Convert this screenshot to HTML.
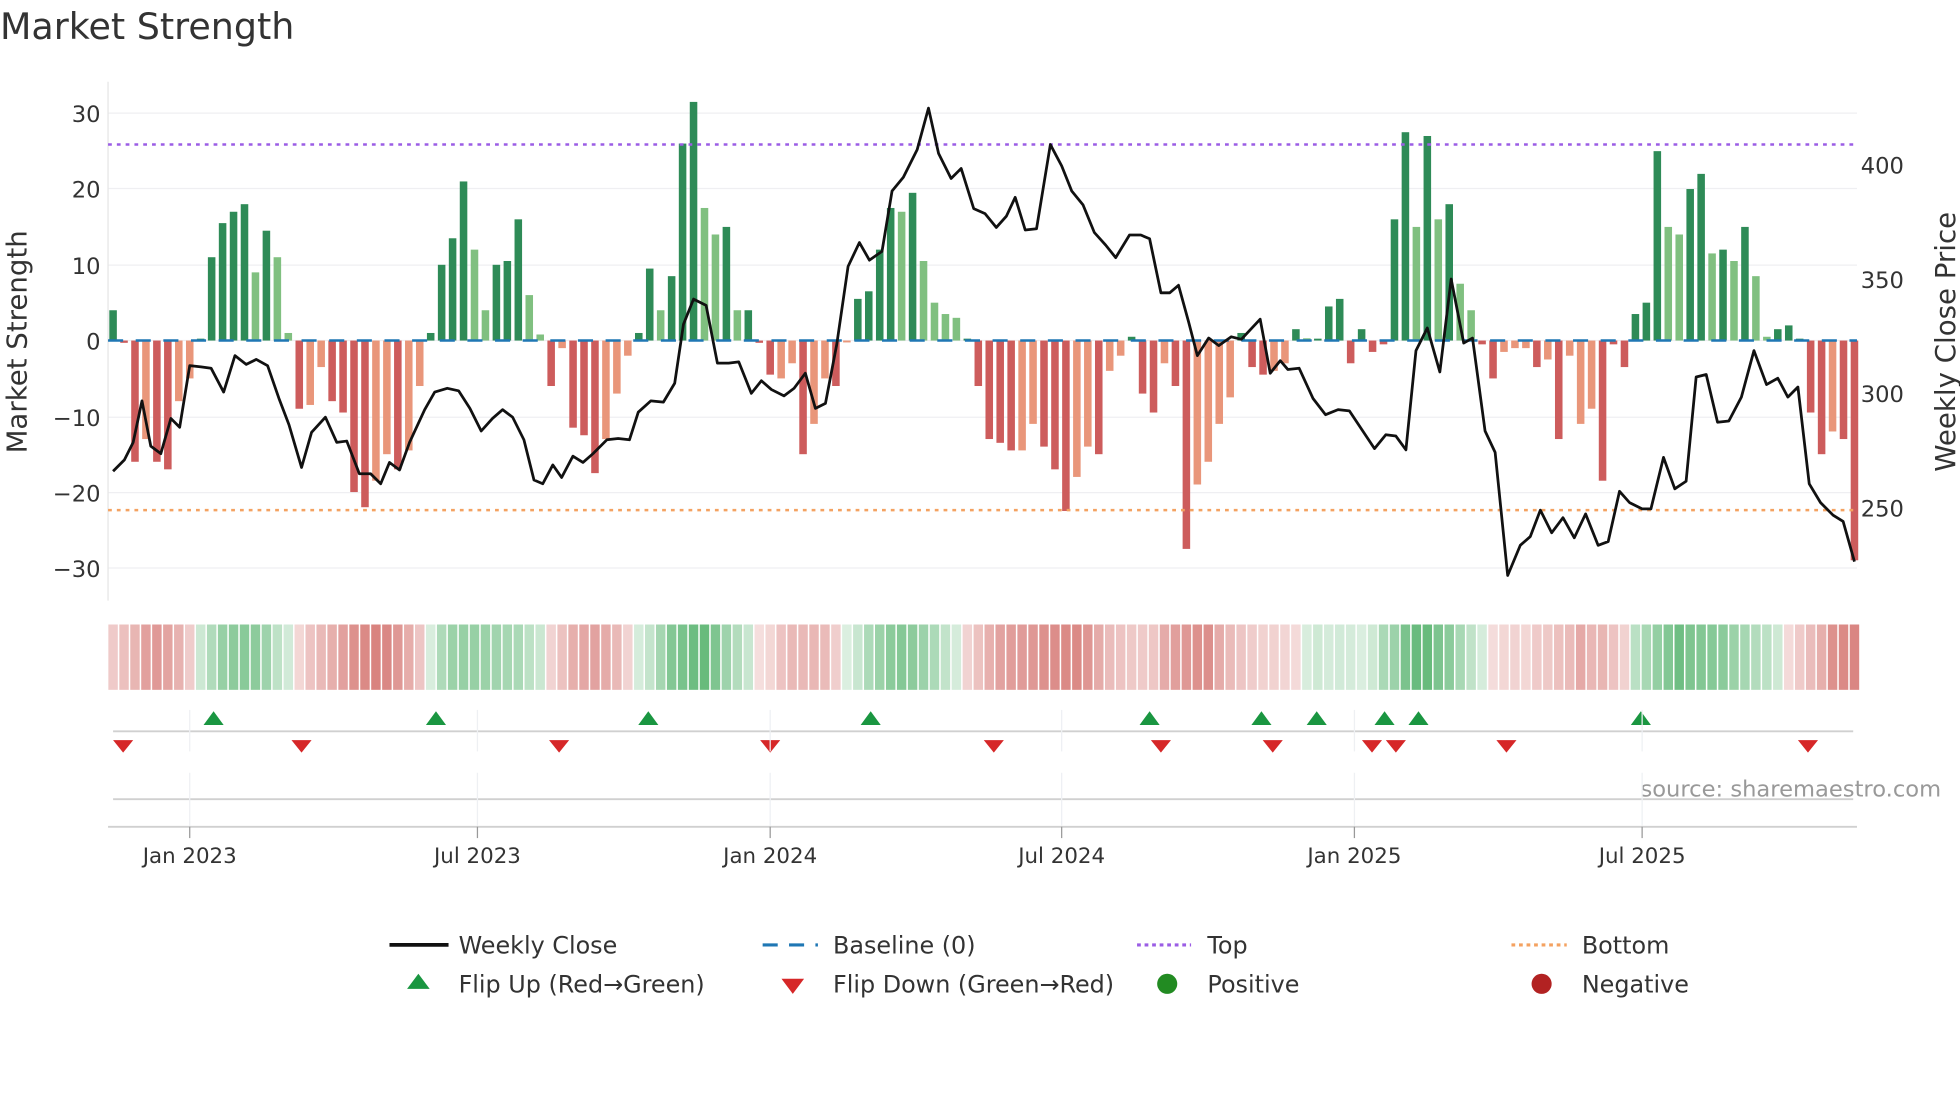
<!DOCTYPE html>
<html><head><meta charset="utf-8"><style>
html,body{margin:0;padding:0;background:#fff;}
svg{display:block;}
text{font-family:"DejaVu Sans","Liberation Sans",sans-serif;}
</style></head><body>
<svg id="s" width="1960" height="1102" viewBox="0 0 1560 877" xmlns="http://www.w3.org/2000/svg">
<rect width="1560" height="877" fill="#fff"/>
<text x="0" y="31" font-size="29" fill="#333">Market Strength</text>
<g id="grid"></g>
<line x1="86" y1="65" x2="86" y2="478" stroke="#e6e6e6" stroke-width="1"/>
<g id="bars"></g>
<line x1="86" y1="115" x2="1478" y2="115" stroke="#9b5de5" stroke-width="2" stroke-dasharray="3,4"/>
<line x1="86" y1="406" x2="1478" y2="406" stroke="#f4a261" stroke-width="2" stroke-dasharray="3,4"/>
<line x1="86" y1="271" x2="1478" y2="271" stroke="#1f77b4" stroke-width="2" stroke-dasharray="12,10"/>
<polyline id="price" fill="none" stroke="#111" stroke-width="2.2" stroke-linejoin="round"/>
<g id="strip"></g>
<g id="markers"></g>
<line x1="90" y1="582" x2="1475" y2="582" stroke="#d0d0d0" stroke-width="1.5"/>
<line x1="90" y1="636" x2="1475" y2="636" stroke="#d0d0d0" stroke-width="1.5"/>
<line x1="86" y1="658" x2="1478" y2="658" stroke="#d0d0d0" stroke-width="1.5"/>
<text x="1545" y="634" font-size="18" fill="#999" text-anchor="end">source: sharemaestro.com</text>
<g id="xt"></g>
<g font-size="18" fill="#333" text-anchor="end">
<text x="80" y="97">30</text><text x="80" y="157">20</text><text x="80" y="218">10</text><text x="80" y="278">0</text>
<text x="80" y="339">−10</text><text x="80" y="399">−20</text><text x="80" y="459">−30</text>
</g>
<g font-size="18" fill="#333">
<text x="1481" y="138">400</text><text x="1481" y="229">350</text><text x="1481" y="320">300</text><text x="1481" y="411">250</text>
</g>
<text transform="translate(21,272) rotate(-90)" font-size="22" fill="#333" text-anchor="middle">Market Strength</text>
<text transform="translate(1556,272) rotate(-90)" font-size="22" fill="#333" text-anchor="middle">Weekly Close Price</text>
<g font-size="19" fill="#333">
<line x1="310" y1="752" x2="357" y2="752" stroke="#111" stroke-width="3"/>
<text x="365" y="759">Weekly Close</text>
<line x1="607" y1="752" x2="651" y2="752" stroke="#1f77b4" stroke-width="2.5" stroke-dasharray="12,9"/>
<text x="663" y="759">Baseline (0)</text>
<line x1="905" y1="752" x2="948" y2="752" stroke="#9b5de5" stroke-width="2.5" stroke-dasharray="3,3"/>
<text x="961" y="759">Top</text>
<line x1="1203" y1="752" x2="1247" y2="752" stroke="#f4a261" stroke-width="2.5" stroke-dasharray="3,3"/>
<text x="1259" y="759">Bottom</text>
<polygon points="333,775 342,787 324,787" fill="#1a9641"/>
<text x="365" y="790">Flip Up (Red→Green)</text>
<polygon points="622,779 640,779 631,791" fill="#d62728"/>
<text x="663" y="790">Flip Down (Green→Red)</text>
<circle cx="929" cy="783" r="8" fill="#228b22"/>
<text x="961" y="790">Positive</text>
<circle cx="1227" cy="783" r="8" fill="#b22222"/>
<text x="1259" y="790">Negative</text>
</g>
</svg>
<script>
var NS="http://www.w3.org/2000/svg";
function el(p,t,a){var e=document.createElementNS(NS,t);for(var k in a)e.setAttribute(k,a[k]);document.getElementById(p).appendChild(e);return e;}
[90,150,211,271,332,392,452].forEach(function(y){el("grid","line",{x1:86,y1:y,x2:1478,y2:y,stroke:"#efeff2","stroke-width":1});});
var B=[[4,1],[-0.3,1],[-16,1],[-13,0],[-16,1],[-17,1],[-8,0],[-5,0],[0,1],[11,1],[15.5,1],[17,1],[18,1],[9,0],[14.5,1],[11,0],[1,0],[-9,1],[-8.5,0],[-3.5,0],[-8,1],[-9.5,1],[-20,1],[-22,1],[-18.5,0],[-15,0],[-17,1],[-14.5,0],[-6,0],[1,1],[10,1],[13.5,1],[21,1],[12,0],[4,0],[10,1],[10.5,1],[16,1],[6,0],[0.8,0],[-6,1],[-1,0],[-11.5,1],[-12.5,1],[-17.5,1],[-13,0],[-7,0],[-2,0],[1,1],[9.5,1],[4,0],[8.5,1],[26,1],[31.5,1],[17.5,0],[14,0],[15,1],[4,0],[4,1],[-0.3,1],[-4.5,1],[-5,0],[-3,0],[-15,1],[-11,0],[-5,0],[-6,1],[-0.2,0],[5.5,1],[6.5,1],[12,1],[17.5,1],[17,0],[19.5,1],[10.5,0],[5,0],[3.5,0],[3,0],[0,1],[-6,1],[-13,1],[-13.5,1],[-14.5,1],[-14.5,0],[-11,0],[-14,1],[-17,1],[-22.5,1],[-18,0],[-14,0],[-15,1],[-4,0],[-2,0],[0.5,1],[-7,1],[-9.5,1],[-3,0],[-6,1],[-27.5,1],[-19,0],[-16,0],[-11,0],[-7.5,0],[1,1],[-3.5,1],[-4.5,1],[-4,0],[-3,0],[1.5,1],[0.3,0],[0,1],[4.5,1],[5.5,1],[-3,1],[1.5,1],[-1.5,1],[-0.5,1],[16,1],[27.5,1],[15,0],[27,1],[16,0],[18,1],[7.5,0],[4,0],[-0.5,1],[-5,1],[-1.5,0],[-1,0],[-1,0],[-3.5,1],[-2.5,0],[-13,1],[-2,0],[-11,0],[-9,0],[-18.5,1],[-0.5,1],[-3.5,1],[3.5,1],[5,1],[25,1],[15,0],[14,0],[20,1],[22,1],[11.5,0],[12,1],[10.5,0],[15,1],[8.5,0],[0.5,0],[1.5,1],[2,1],[0,1],[-9.5,1],[-15,1],[-12,0],[-13,1],[-29,1]];
var n=B.length,x0=90,x1=1476,st=(x1-x0)/(n-1);
B.forEach(function(b,i){var v=b[0],x=x0+i*st,y=271-v*6.03,c;
 if(v>=0)c=b[1]?"#2e8b57":"#80c080";else c=b[1]?"#cd5c5c":"#e9967a";
 var h=Math.max(Math.abs(v*6.03),1.5);
 el("bars","rect",{x:x-3,y:v>=0?271-h:271,width:6,height:h,fill:c});
 var s=0,c2=0;for(var j=Math.max(0,i-2);j<=Math.min(n-1,i+2);j++){s+=B[j][0];c2++;}s/=c2;
 var a=Math.min(0.18+Math.abs(s)/35,0.8);
 el("strip","rect",{x:x-st/2+0.6,y:497,width:st-1.2,height:52,fill:s>=0?"#3aa655":"#c9504b","fill-opacity":a.toFixed(2)});
});
var P=[[90,375],[99,366],[106,352],[113,319],[120,355],[128,361],[136,333],[143,340],[151,291],[160,292],[168,293],[178,312],[187,283],[196,290],[204,286],[213,291],[222,317],[230,338],[240,372],[248,344],[259,332],[268,352],[276,351],[286,377],[295,377],[303,385],[310,368],[318,374],[326,352],[338,326],[346,312],[356,309],[365,311],[374,325],[383,343],[392,333],[400,326],[408,332],[417,350],[425,382],[432,385],[440,370],[447,380],[456,363],[464,368],[472,361],[483,350],[492,349],[501,350],[508,328],[518,319],[528,320],[537,305],[544,258],[552,238],[562,243],[571,289],[580,289],[588,288],[598,313],[606,303],[614,310],[624,315],[632,309],[641,297],[649,325],[657,321],[666,274],[675,212],[684,193],[692,207],[702,200],[710,152],[719,141],[730,119],[739,86],[747,122],[757,142],[765,134],[775,166],[784,170],[793,181],[801,172],[808,157],[816,183],[825,182],[836,115],[845,132],[853,152],[862,163],[871,185],[880,195],[888,205],[899,187],[908,187],[915,190],[924,233],[931,233],[938,227],[946,256],[953,283],[962,269],[970,275],[980,268],[988,270],[1003,254],[1011,297],[1019,287],[1025,294],[1034,293],[1045,317],[1055,330],[1065,326],[1074,327],[1094,357],[1103,346],[1111,347],[1119,358],[1127,279],[1136,261],[1146,296],[1155,222],[1165,273],[1172,269],[1182,343],[1190,360],[1200,458],[1210,434],[1218,427],[1226,406],[1235,424],[1244,412],[1253,428],[1262,409],[1272,434],[1280,431],[1289,391],[1297,400],[1307,405],[1314,405],[1324,364],[1333,389],[1342,383],[1350,300],[1358,298],[1367,336],[1376,335],[1386,316],[1396,279],[1406,306],[1415,301],[1423,316],[1431,308],[1440,385],[1449,400],[1459,410],[1467,415],[1476,447]];
document.getElementById("price").setAttribute("points",P.map(function(p){return p.join(",");}).join(" "));
[["Jan 2023",151],["Jul 2023",380],["Jan 2024",613],["Jul 2024",845],["Jan 2025",1078],["Jul 2025",1307]].forEach(function(t){
 el("xt","line",{x1:t[1],y1:565,x2:t[1],y2:598,stroke:"#eef0f3"});
 el("xt","line",{x1:t[1],y1:615,x2:t[1],y2:657,stroke:"#eef0f3"});
 el("xt","line",{x1:t[1],y1:658,x2:t[1],y2:667,stroke:"#999"});
 var tx=el("xt","text",{x:t[1],y:687,"font-size":17,fill:"#333","text-anchor":"middle"});tx.textContent=t[0];
});
[170,347,516,693,915,1004,1048,1102,1129,1306].forEach(function(x){el("markers","polygon",{points:(x)+",566 "+(x+8)+",577 "+(x-8)+",577",fill:"#1a9641"});});
[98,240,445,613,791,924,1013,1092,1111,1199,1439].forEach(function(x){el("markers","polygon",{points:(x-8)+",589 "+(x+8)+",589 "+x+",599",fill:"#d62728"});});
</script>
</body></html>
